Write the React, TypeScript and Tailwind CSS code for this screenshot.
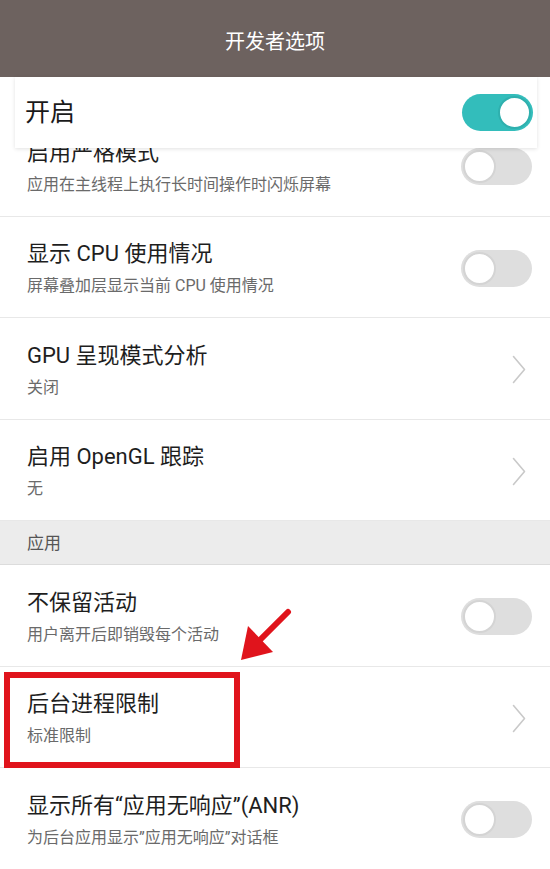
type Row = { title: string; sub: string; kind: "switch" | "link" };

const TOP_ROWS: Row[] = [
  { title: "启用严格模式", sub: "应用在主线程上执行长时间操作时闪烁屏幕", kind: "switch" },
  { title: "显示 CPU 使用情况", sub: "屏幕叠加层显示当前 CPU 使用情况", kind: "switch" },
  { title: "GPU 呈现模式分析", sub: "关闭", kind: "link" },
  { title: "启用 OpenGL 跟踪", sub: "无", kind: "link" },
];

const APP_ROWS: Row[] = [
  { title: "不保留活动", sub: "用户离开后即销毁每个活动", kind: "switch" },
  { title: "后台进程限制", sub: "标准限制", kind: "link" },
  { title: "显示所有“应用无响应”(ANR)", sub: "为后台应用显示”应用无响应”对话框", kind: "switch" },
];

function Toggle({ on }: { on?: boolean }) {
  return (
    <div
      className={`w-[71px] h-[37px] rounded-full p-[2px] flex items-center ${
        on ? "bg-[#33bdbb] justify-end" : "bg-[#dedede] justify-start"
      }`}
    >
      <div
        className={`w-[33px] h-[33px] rounded-full bg-white border-2 ${
          on ? "border-[#2fb0ae]" : "border-[#d4d4d4]"
        }`}
      />
    </div>
  );
}

function Chevron() {
  return (
    <svg width="14" height="29" viewBox="0 0 14 29" className="mr-[6px]">
      <path d="M1.5 1.5 L12.5 14.5 L1.5 27.5" fill="none" stroke="#c9c9c9" strokeWidth="1.6" strokeLinecap="round" strokeLinejoin="round" />
    </svg>
  );
}

function SettingRow({ row }: { row: Row }) {
  return (
    <div className="h-[101.5px] border-b border-[#e8e8e8] flex items-center pl-[27px] pr-[18px] pt-[3px]">
      <div className="flex-1 flex flex-col">
        <div className="text-[22px] leading-[30px] text-[#1e1e1e]">{row.title}</div>
        <div className="text-[16px] leading-[22px] text-[#6a6a6a] mt-[6px]">{row.sub}</div>
      </div>
      {row.kind === "switch" ? <Toggle /> : <Chevron />}
    </div>
  );
}

export default function App() {
  return (
    <div
      className="w-[550px] h-[869px] overflow-hidden bg-white relative"
      style={{ fontFamily: 'Roboto, "Noto Sans CJK SC", sans-serif' }}
    >
      <div className="h-[77px] bg-[#6d625f] flex items-center justify-center">
        <span className="text-white text-[20px] mt-[6px]">开发者选项</span>
      </div>

      <div className="relative">
        {/* floating master switch card */}
        <div className="absolute top-0 left-[15px] right-[13px] h-[71px] bg-white z-10 shadow-[0_1px_4px_rgba(0,0,0,0.12)] flex items-center pl-[10px] pr-[4px]">
          <span className="flex-1 text-[25px] text-[#1a1a1a]">开启</span>
          <Toggle on />
        </div>

        <div className="pt-[38px]">
          {TOP_ROWS.map((r) => (
            <SettingRow key={r.title} row={r} />
          ))}
          <div className="h-[44px] bg-[#ececec] border-b border-[#dcdcdc] flex items-center pl-[27px]">
            <span className="text-[17px] text-[#555] mt-[2px]">应用</span>
          </div>
          {APP_ROWS.map((r) => (
            <SettingRow key={r.title} row={r} />
          ))}
        </div>
      </div>

      {/* annotation: red box + arrow */}
      <div className="absolute left-[4px] top-[672px] w-[236px] h-[96px] border-[6px] border-[#e0141c] pointer-events-none" />
      <svg className="absolute left-0 top-0 pointer-events-none" width="550" height="869">
        <line x1="288" y1="612" x2="252" y2="648" stroke="#e0141c" strokeWidth="6" strokeLinecap="round" />
        <polygon points="241,660 248,626 273,652" fill="#e0141c" />
      </svg>
    </div>
  );
}
